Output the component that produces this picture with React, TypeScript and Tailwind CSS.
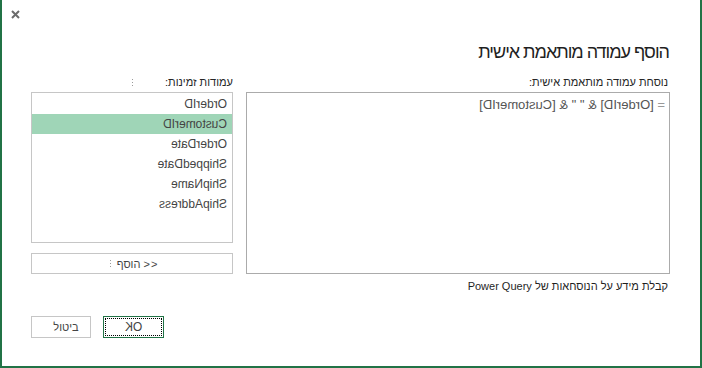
import React from "react";

const items = ["OrderID", "CustomerID", "OrderDate", "ShippedDate", "ShipName", "ShipAddress"];

function Dots() {
  return (
    <span className="flex flex-col gap-[2px] w-[1px]">
      <span className="block w-[1px] h-[1px] bg-[#9a9a9a]" />
      <span className="block w-[1px] h-[1px] bg-[#9a9a9a]" />
      <span className="block w-[1px] h-[1px] bg-[#9a9a9a]" />
    </span>
  );
}

export default function App() {
  return (
    <div
      className="w-[702px] h-[368px] bg-white border-x-2 border-b-2 border-[#217346] flex flex-col text-[#262626]"
      style={{ fontFamily: '"Liberation Sans", "DejaVu Sans", sans-serif' }}
    >
      <div className="h-[20px] pt-[10px] pl-[9px]">
        <svg width="9" height="9" viewBox="0 0 9 9">
          <path d="M1 1 L8 8 M8 1 L1 8" stroke="#6b6b6b" strokeWidth="2" />
        </svg>
      </div>
      <div dir="rtl" className="mt-[20px] h-[24px] pr-[31px] text-[18px] leading-[24px] tracking-[-1px] text-[#1f1f1f]">
        הוסף עמודה מותאמת אישית
      </div>
      <div className="mt-[11px] flex pl-[29px] gap-[13px]">
        {/* left column */}
        <div className="w-[202px] flex flex-col">
          <div className="h-[14px] flex items-center">
            <div className="flex-1" />
            <Dots />
            <div dir="rtl" className="flex-1 text-[11px] leading-[14px] text-right">
              עמודות זמינות:
            </div>
          </div>
          <div className="mt-[3px] h-[151px] border border-[#c6c6c6] pt-[1px] flex flex-col">
            {items.map((it, i) => (
              <div
                key={it}
                className={
                  "h-[20px] leading-[20px] text-[12px] text-[#444] " +
                  (i === 1 ? "bg-[#9fd5b7]" : "")
                }
              >
                <div className="-scale-x-100 pl-[5px] text-left">{it}</div>
              </div>
            ))}
          </div>
          <div className="mt-[10px] h-[21px] border border-[#c6c6c6] flex items-center justify-center gap-[6px] pl-[4px]">
            <Dots />
            <span className="text-[11px] leading-[14px] text-[#444]">
              הוסף <span className="tracking-[1px]">&gt;&gt;</span>
            </span>
          </div>
        </div>
        {/* right column */}
        <div className="w-[424px] flex flex-col">
          <div dir="rtl" className="h-[14px] text-[11px] leading-[14px] pr-[2px]">
            נוסחת עמודה מותאמת אישית:
          </div>
          <div className="mt-[3px] h-[182px] border border-[#ababab]">
            <div className="-scale-x-100 pl-[4px] pt-[4px] text-[13px] leading-[16px] text-[#555] text-left whitespace-pre">
              <span className="text-[#999]">=</span> [OrderID] &amp; " " &amp; [CustomerID]
            </div>
          </div>
          <div dir="rtl" className="mt-[5px] h-[14px] text-[11px] leading-[14px] pr-[2px] text-[#1f1f1f]">
            קבלת מידע על הנוסחאות של Power Query
          </div>
        </div>
      </div>
      <div className="mt-[23px] flex pl-[29px] gap-[12px]">
        <div className="w-[60px] h-[22px] border border-[#c6c6c6] flex items-center justify-center pl-[10px]">
          <span dir="rtl" className="text-[11px] leading-[14px] text-[#444]">ביטול</span>
        </div>
        <div className="w-[61px] h-[22px] border border-[#217346] p-[1px]">
          <div className="w-full h-full border border-dotted border-black flex items-center justify-center">
            <span className="-scale-x-100 inline-block text-[12px] leading-[14px] text-[#444]">OK</span>
          </div>
        </div>
      </div>
    </div>
  );
}
